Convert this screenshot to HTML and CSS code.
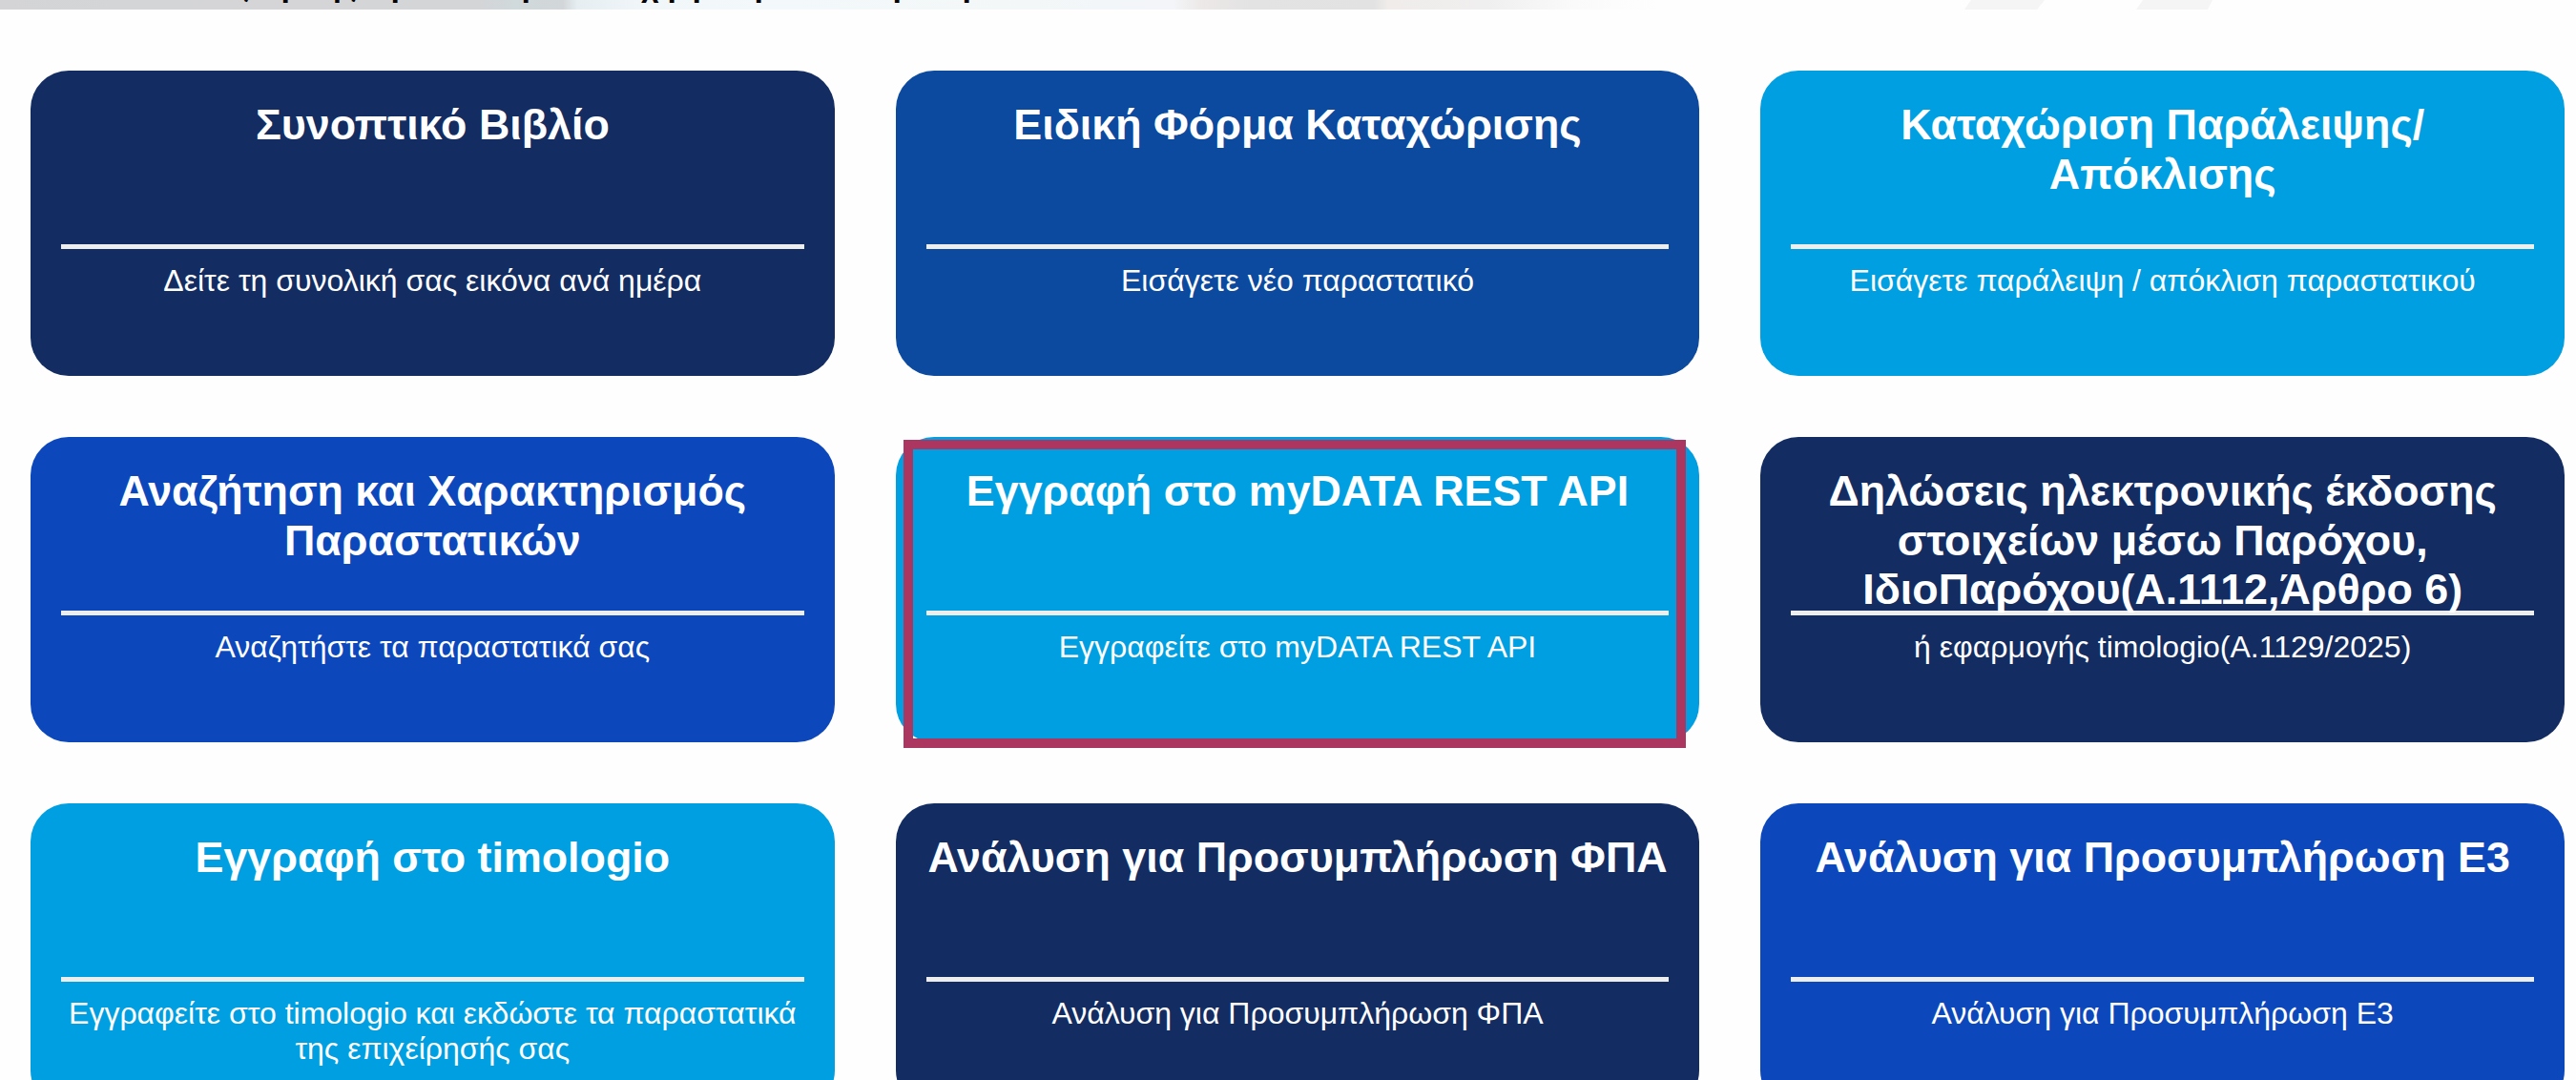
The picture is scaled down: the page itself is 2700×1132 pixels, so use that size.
FILE: index.html
```html
<!DOCTYPE html>
<html lang="el">
<head>
  <meta charset="UTF-8" />
  <meta name="viewport" content="width=device-width, initial-scale=1.0"/>
  <title>myDATA</title>
  <link rel="stylesheet" href="styles.css">
</head>
<body>

  <header class="banner">
    <p class="banner-text">
      <span>ς</span><span>ρ</span><span>ης</span><span>ρ</span><span>ρ</span><span>χ</span><span>ρ</span><span>ρ</span><span>ρ</span><span>ρ</span><span>ρ</span>
    </p>
    <svg class="banner-stripes" width="270" height="10" viewBox="0 0 270 10">
      <path d="M7 0H84L76 10H0Z" fill="#f5f5f5"/>
      <path d="M187 0H260L255 10H180Z" fill="#f5f5f5"/>
    </svg>
  </header>

  <main class="cards">
    <a class="card navy">
      <h2>Συνοπτικό Βιβλίο</h2>
      <p>Δείτε τη συνολική σας εικόνα ανά ημέρα</p>
    </a>
    <a class="card blue">
      <h2>Ειδική Φόρμα Καταχώρισης</h2>
      <p>Εισάγετε νέο παραστατικό</p>
    </a>
    <a class="card cyan">
      <h2>Καταχώριση Παράλειψης/Απόκλισης</h2>
      <p>Εισάγετε παράλειψη / απόκλιση παραστατικού</p>
    </a>
    <a class="card royal">
      <h2>Αναζήτηση και Χαρακτηρισμός Παραστατικών</h2>
      <p>Αναζητήστε τα παραστατικά σας</p>
    </a>
    <a class="card cyan marked">
      <h2>Εγγραφή στο myDATA REST API</h2>
      <p>Εγγραφείτε στο myDATA REST API</p>
    </a>
    <a class="card navy">
      <h2>Δηλώσεις ηλεκτρονικής έκδοσης στοιχείων μέσω Παρόχου, ΙδιοΠαρόχου(Α.1112,Άρθρο 6)</h2>
      <p>ή εφαρμογής timologio(Α.1129/2025)</p>
    </a>
    <a class="card cyan">
      <h2>Εγγραφή στο timologio</h2>
      <p>Εγγραφείτε στο timologio και εκδώστε τα παραστατικά της επιχείρησής σας</p>
    </a>
    <a class="card navy">
      <h2>Ανάλυση για Προσυμπλήρωση ΦΠΑ</h2>
      <p>Ανάλυση για Προσυμπλήρωση ΦΠΑ</p>
    </a>
    <a class="card royal">
      <h2>Ανάλυση για Προσυμπλήρωση Ε3</h2>
      <p>Ανάλυση για Προσυμπλήρωση Ε3</p>
    </a>
  </main>

</body>
</html>
```

FILE: styles.css
```css
body {
  font-family: "Liberation Sans", Arial, sans-serif;
  background-color: #fefefe;
  margin: 0;
  overflow: hidden;
  height: 1132px;
}
.banner {
  height: 10.3px;
  overflow: hidden;
  display: flex;
  background: linear-gradient(90deg, #d4d4d6 0, #d3d5d7 130px, #d5d5d7 230px, #d4d5d7 500px, #d0d9db 540px, #d2d6d8 590px, #e6eef1 605px, #f1f6f9 680px, #f3f8fa 800px, #f3f7f8 1080px, #f3f5f8 1230px, #ece8e7 1260px, #e3e3e3 1310px, #e2e2e2 1440px, #efecea 1455px, #f0efef 1560px, #fafafa 1650px, #fefefe 1740px);
}
.banner-text {
  display: grid;
  grid-template-columns: 50px 43px 72px 137px 125px 28px 26px 65px 145px 73px 30px;
  flex: none;
  margin: -33px 0 0 245px;
  width: 1814px;
  font-size: 32px;
  font-weight: bold;
  line-height: 37px;
  color: black;
}
.banner-stripes {
  flex: none;
}
.cards {
  display: grid;
  grid-template-columns: repeat(3, 1fr);
  gap: 64px;
  padding: 64px 12px 0 32px;
}
.card {
  position: relative;
  height: 319.8px;
  box-sizing: border-box;
  padding: 31px 32px 32px;
  border-radius: 40px;
  color: white;
  text-align: center;
  text-decoration: none;
}
.card h2 {
  margin: 0;
  height: 151px;
  font-size: 44.8px;
  line-height: 51.5px;
  border-bottom: 5px solid #eee;
}
.card p {
  margin: 15px 0 0;
  font-size: 32px;
  line-height: 37px;
}
.navy {
  background-color: #132d62;
}
.blue {
  background-color: #0b4a9e;
}
.cyan {
  background-color: #009fe1;
}
.royal {
  background-color: #0c48bc;
}
/* frame around the highlighted card */
.marked::after {
  content: "";
  position: absolute;
  left: 8px;
  top: 3px;
  width: 800px;
  height: 303px;
  border: 10px solid #ab3761;
}
```
